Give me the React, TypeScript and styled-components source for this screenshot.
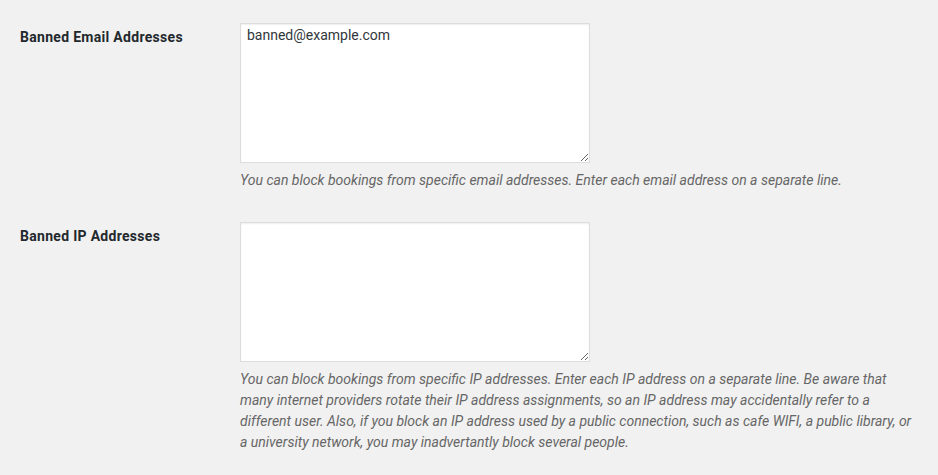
import React from "react";
import styled, { createGlobalStyle } from "styled-components";

const GlobalStyle = createGlobalStyle`
  html, body {
    margin: 0;
    padding: 0;
    background: #f1f1f1;
  }
  body {
    font-family: Roboto, "Noto Sans", sans-serif;
    font-size: 14px;
    color: #444;
  }
`;

const Page = styled.div`
  padding: 8px 0 0 20px;
  width: 938px;
  box-sizing: border-box;
`;

const Row = styled.div`
  display: grid;
  grid-template-columns: 200px 1fr;
`;

const Label = styled.label`
  display: block;
  padding: 20px 10px 20px 0;
  font-weight: 700;
  font-size: 14px;
  line-height: 1.3;
  letter-spacing: 0.3px;
  color: #23282d;
`;

const Field = styled.div`
  padding: 15px 8px 16px 20px;
  min-width: 0;
`;

const TextArea = styled.textarea`
  display: block;
  box-sizing: border-box;
  width: 350px;
  height: 140px;
  margin: 0;
  padding: 2px 6px;
  border: 1px solid #ddd;
  border-radius: 0;
  background: #fff;
  box-shadow: inset 0 1px 2px rgba(0, 0, 0, 0.07);
  font-family: Roboto, "Noto Sans", sans-serif;
  font-size: 14px;
  line-height: 19px;
  color: #32373c;
  outline: none;
`;

const Description = styled.p`
  margin: 7px 0 0;
  max-width: 677px;
  font-style: italic;
  font-size: 14px;
  line-height: 21px;
  color: #666;
`;

type SettingProps = {
  id: string;
  label: string;
  value?: string;
  description: string;
};

function Setting({ id, label, value, description }: SettingProps) {
  return (
    <Row>
      <Label htmlFor={id}>{label}</Label>
      <Field>
        <TextArea id={id} defaultValue={value} spellCheck={false} />
        <Description>{description}</Description>
      </Field>
    </Row>
  );
}

export default function App() {
  return (
    <>
      <GlobalStyle />
      <Page>
        <Setting
          id="banned-emails"
          label="Banned Email Addresses"
          value="banned@example.com"
          description="You can block bookings from specific email addresses. Enter each email address on a separate line."
        />
        <Setting
          id="banned-ips"
          label="Banned IP Addresses"
          description="You can block bookings from specific IP addresses. Enter each IP address on a separate line. Be aware that many internet providers rotate their IP address assignments, so an IP address may accidentally refer to a different user. Also, if you block an IP address used by a public connection, such as cafe WIFI, a public library, or a university network, you may inadvertantly block several people."
        />
      </Page>
    </>
  );
}
